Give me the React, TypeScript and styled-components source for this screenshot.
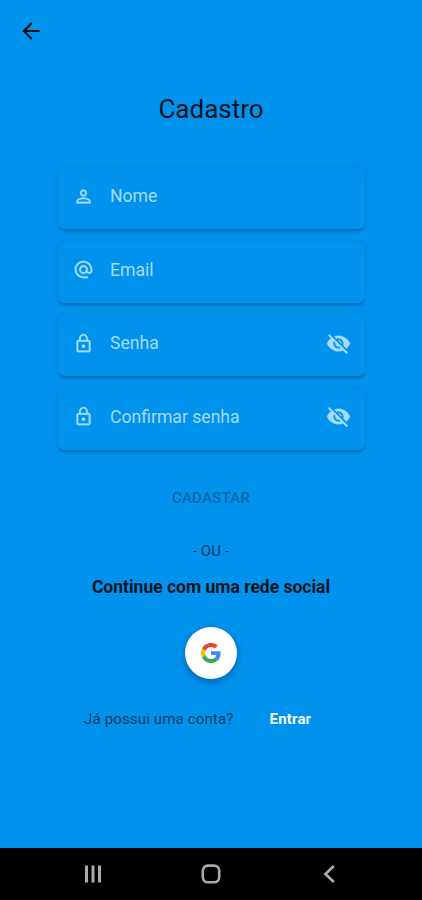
import React from 'react';
import styled, { createGlobalStyle } from 'styled-components';
import {
  MdAlternateEmail,
  MdArrowBack,
  MdPersonOutline,
  MdLockOutline,
  MdVisibilityOff,
} from 'react-icons/md';

const GlobalStyle = createGlobalStyle`
  * { box-sizing: border-box; }
  body { margin: 0; font-family: Roboto, sans-serif; background: #0092ec; }
  button { border: 0; padding: 0; background: none; font: inherit; color: inherit; }
  svg { display: block; }
`;

const Screen = styled.div`
  display: flex;
  flex-direction: column;
  width: 422px;
  height: 900px;
  overflow: hidden;
  background: #0092ec;
`;

const TopBar = styled.header`
  display: flex;
  align-items: center;
  height: 62px;
  padding-left: 18px;
  color: #06131d;
  font-size: 26px;
`;

const Content = styled.main`
  flex: 1;
  display: flex;
  flex-direction: column;
  align-items: center;
`;

const Title = styled.h1`
  margin: 31px 0 0;
  font-size: 26px;
  font-weight: 400;
  line-height: 32px;
  color: #06131d;
`;

const Form = styled.form`
  display: flex;
  flex-direction: column;
  gap: 12.5px;
  width: 307px;
  margin-top: 43px;
`;

const Field = styled.label`
  display: flex;
  align-items: center;
  height: 61px;
  padding: 0 14px 5px 15px;
  border-radius: 7px;
  background: #0092ec;
  box-shadow: 0 3px 3px -1px rgba(0, 40, 90, 0.34), 0 1px 5px rgba(0, 40, 90, 0.12);
  color: #a5dbfb;
`;

const FieldIcon = styled.span<{ $size: number }>`
  display: flex;
  justify-content: center;
  width: 22px;
  margin-right: 15.5px;
  font-size: ${(p) => p.$size}px;

  svg { stroke-width: 0.3px; }
  path[fill='none'] { stroke: none; }
`;

const FieldLabel = styled.span`
  flex: 1;
  font-size: 17.6px;
  line-height: 22px;
`;

const RevealButton = styled.button`
  font-size: 25px;

  svg { stroke-width: 0.3px; }
  path[fill='none'] { stroke: none; }
`;

const SubmitButton = styled.button`
  margin-top: 38px;
  font-size: 15px;
  font-weight: 500;
  line-height: 20px;
  letter-spacing: 0.25px;
  color: #0467aa;
`;

const Divider = styled.p`
  margin: 33px 0 0;
  font-size: 15px;
  line-height: 20px;
  letter-spacing: 0.15px;
  color: #063c60;
`;

const SocialHeading = styled.h2`
  margin: 15px 0 0;
  font-size: 17.5px;
  font-weight: 700;
  line-height: 22px;
  color: #031521;
`;

const GoogleButton = styled.button`
  display: grid;
  place-items: center;
  width: 52px;
  height: 52px;
  margin-top: 29px;
  border-radius: 50%;
  background: #fff;
  box-shadow: 0 4px 6px rgba(0, 40, 90, 0.3), 0 1px 8px rgba(0, 40, 90, 0.14);
`;

const LoginRow = styled.div`
  display: flex;
  align-self: flex-start;
  gap: 36px;
  margin: 30px 0 0 84px;
  font-size: 15px;
  line-height: 20px;
  letter-spacing: 0.16px;
  color: #063c60;
`;

const LoginLink = styled.a`
  font-weight: 700;
  color: #f4fbff;
`;

const NavBar = styled.nav`
  display: flex;
  align-items: center;
  justify-content: space-between;
  height: 52px;
  padding: 0 81px;
  background: #000;
  color: #aaa;
`;

const fields = [
  { label: 'Nome', icon: MdPersonOutline, size: 21 },
  { label: 'Email', icon: MdAlternateEmail, size: 21 },
  { label: 'Senha', icon: MdLockOutline, size: 21, secret: true },
  { label: 'Confirmar senha', icon: MdLockOutline, size: 21, secret: true },
];

const GoogleLogo = () => (
  <svg width="20" height="20" viewBox="0 0 48 48">
    <path fill="#EA4335" d="M24 9.5c3.54 0 6.71 1.22 9.21 3.6l6.85-6.85C35.9 2.38 30.47 0 24 0 14.62 0 6.51 5.38 2.56 13.22l7.98 6.19C12.43 13.72 17.74 9.5 24 9.5z" />
    <path fill="#4285F4" d="M46.98 24.55c0-1.57-.15-3.09-.38-4.55H24v9.02h12.94c-.58 2.96-2.26 5.48-4.78 7.18l7.73 6c4.51-4.18 7.09-10.36 7.09-17.65z" />
    <path fill="#FBBC05" d="M10.53 28.59c-.48-1.45-.76-2.99-.76-4.59s.27-3.14.76-4.59l-7.98-6.19C.92 16.46 0 20.12 0 24c0 3.88.92 7.54 2.56 10.78l7.97-6.19z" />
    <path fill="#34A853" d="M24 48c6.48 0 11.93-2.13 15.89-5.81l-7.73-6c-2.15 1.45-4.92 2.3-8.16 2.3-6.26 0-11.57-4.22-13.47-9.91l-7.98 6.19C6.51 42.62 14.62 48 24 48z" />
  </svg>
);

export default function App() {
  return (
    <Screen>
      <GlobalStyle />
      <TopBar>
        <button aria-label="Voltar"><MdArrowBack /></button>
      </TopBar>
      <Content>
        <Title>Cadastro</Title>
        <Form>
          {fields.map(({ label, icon: Icon, size, secret }) => (
            <Field key={label}>
              <FieldIcon $size={size}><Icon /></FieldIcon>
              <FieldLabel>{label}</FieldLabel>
              {secret && (
                <RevealButton type="button" aria-label="Mostrar senha"><MdVisibilityOff /></RevealButton>
              )}
            </Field>
          ))}
        </Form>
        <SubmitButton>CADASTAR</SubmitButton>
        <Divider>- OU -</Divider>
        <SocialHeading>Continue com uma rede social</SocialHeading>
        <GoogleButton aria-label="Google"><GoogleLogo /></GoogleButton>
        <LoginRow>
          <span>Já possui uma conta?</span>
          <LoginLink>Entrar</LoginLink>
        </LoginRow>
      </Content>
      <NavBar>
        <svg width="24" height="20" viewBox="0 0 24 20" fill="none" stroke="currentColor" strokeWidth="3">
          <path d="M5.5 1.5v17M12 1.5v17M18.5 1.5v17" />
        </svg>
        <svg width="20" height="20" viewBox="0 0 20 20" fill="none" stroke="currentColor" strokeWidth="2.6">
          <rect x="1.8" y="1.6" width="16.4" height="16.6" rx="5" />
        </svg>
        <svg width="24" height="20" viewBox="0 0 24 20" fill="none" stroke="currentColor" strokeWidth="2.7">
          <path d="M16.8 2L8.5 10l8.3 8" />
        </svg>
      </NavBar>
    </Screen>
  );
}
